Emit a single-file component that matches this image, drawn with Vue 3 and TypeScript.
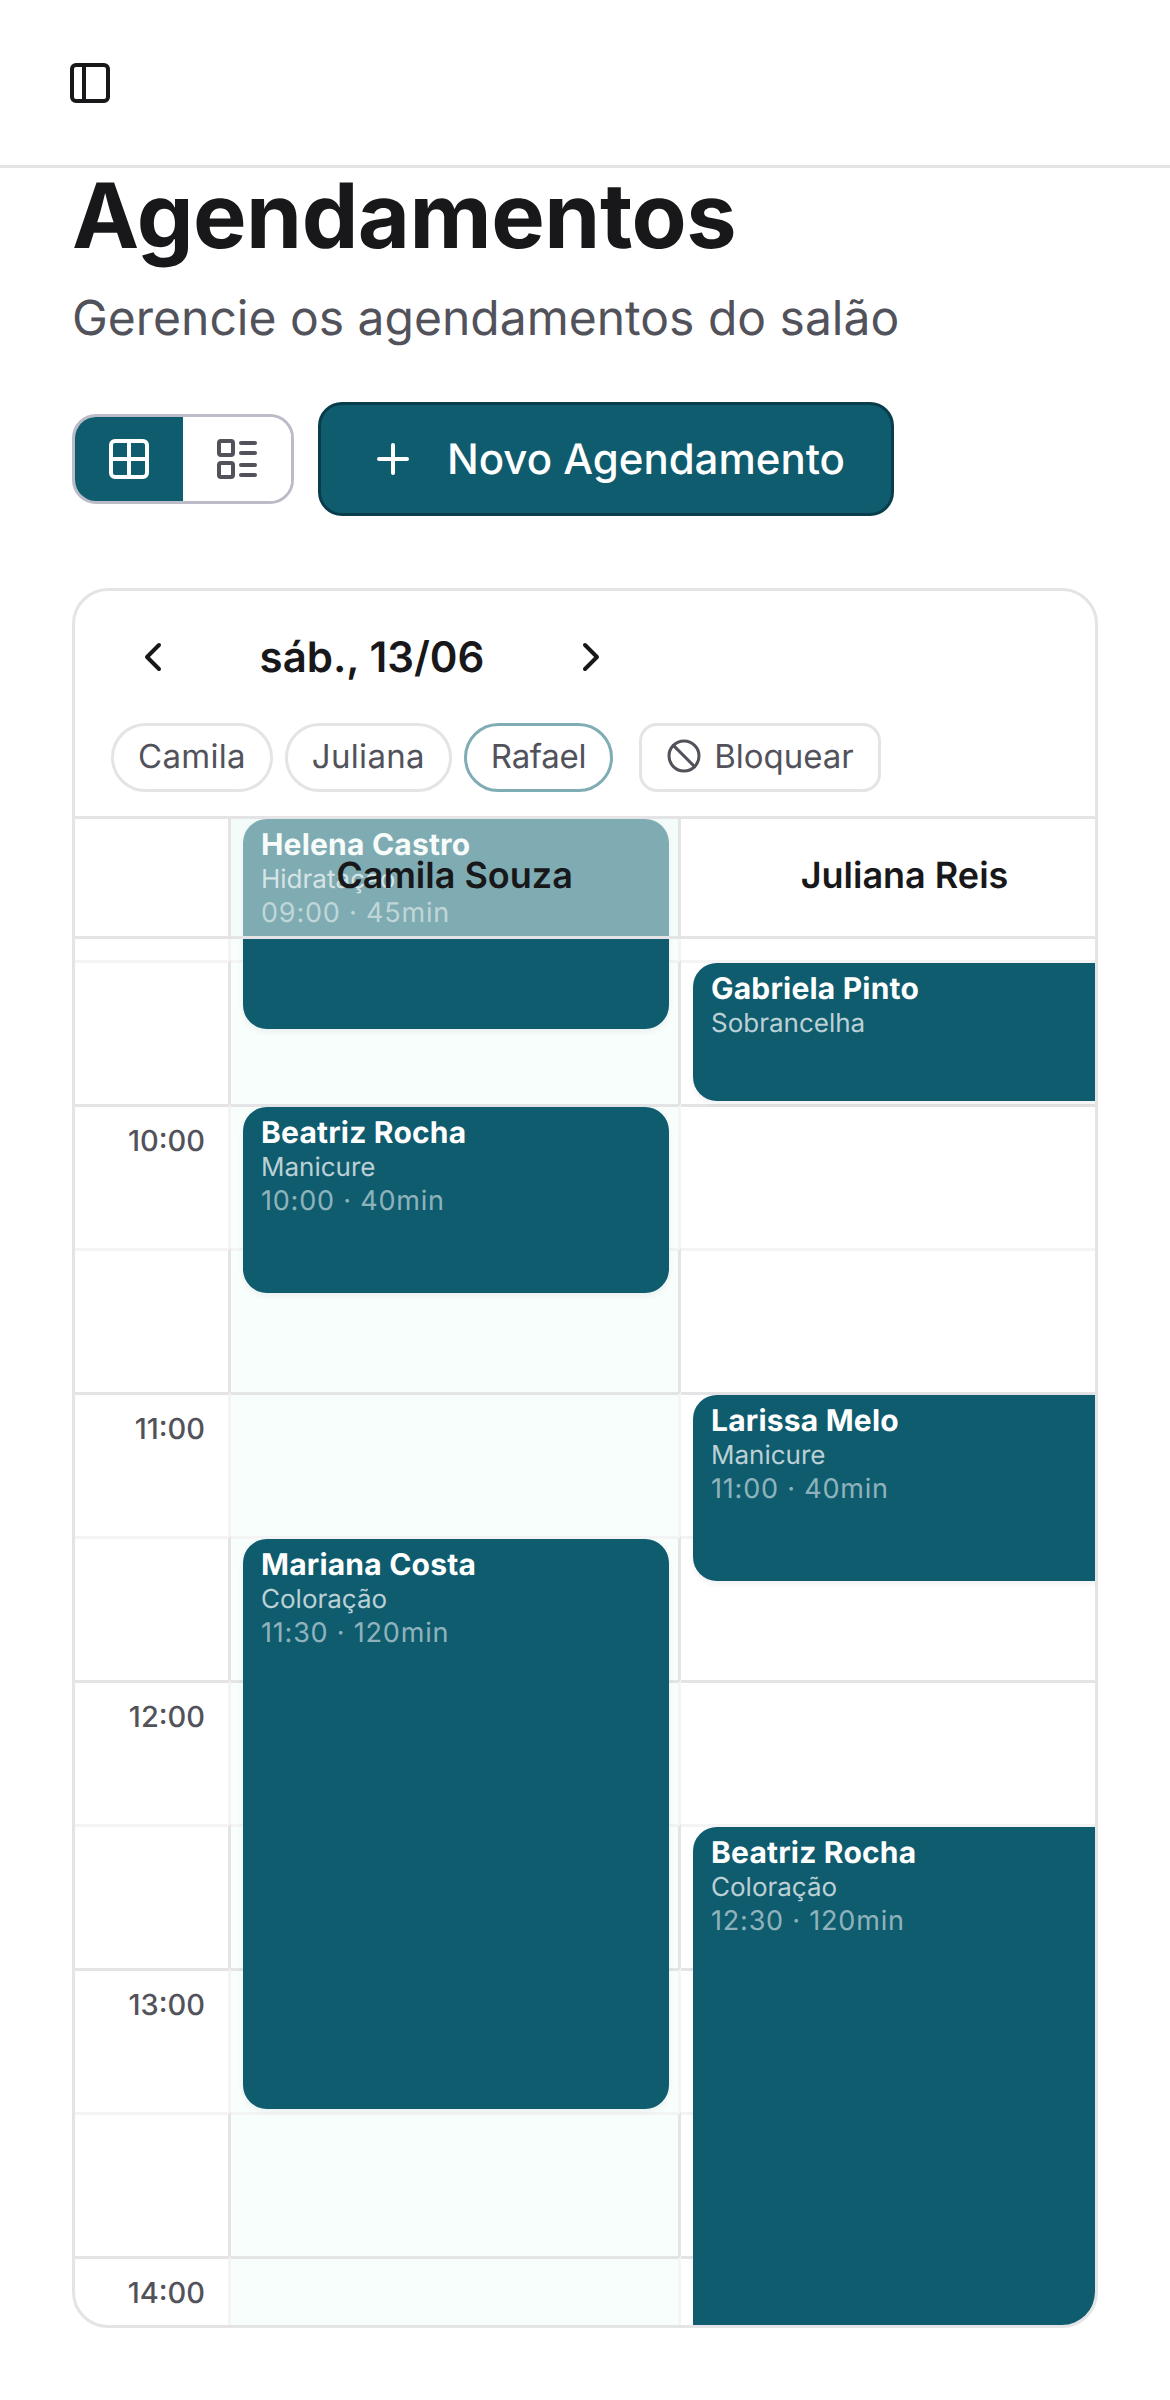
<script setup lang="ts">
interface Booking {
  name: string
  service: string
  start: number
  duration: number
  label: string
  showTime: boolean
}

const times: string[] = []
for (let h = 9; h <= 14; h++) {
  times.push(`${String(h).padStart(2, '0')}:00`)
  if (h < 14) times.push(`${String(h).padStart(2, '0')}:30`)
}

const columns: { name: string; today: boolean; bookings: Booking[] }[] = [
  {
    name: 'Camila Souza',
    today: true,
    bookings: [
      { name: 'Helena Castro', service: 'Hidratação', start: 0, duration: 45, label: '09:00 · 45min', showTime: true },
      { name: 'Beatriz Rocha', service: 'Manicure', start: 60, duration: 40, label: '10:00 · 40min', showTime: true },
      { name: 'Mariana Costa', service: 'Coloração', start: 150, duration: 120, label: '11:30 · 120min', showTime: true },
    ],
  },
  {
    name: 'Juliana Reis',
    today: false,
    bookings: [
      { name: 'Gabriela Pinto', service: 'Sobrancelha', start: 30, duration: 30, label: '', showTime: false },
      { name: 'Larissa Melo', service: 'Manicure', start: 120, duration: 40, label: '11:00 · 40min', showTime: true },
      { name: 'Beatriz Rocha', service: 'Coloração', start: 210, duration: 120, label: '12:30 · 120min', showTime: true },
    ],
  },
]

const filters = [
  { label: 'Camila', active: false },
  { label: 'Juliana', active: false },
  { label: 'Rafael', active: true },
]

function bookingStyle(b: Booking) {
  return {
    top: `${3 + (b.start / 30) * 144}px`,
    height: `${(b.duration / 30) * 144 - 6}px`,
  }
}
</script>

<template>
  <div class="page">
    <header class="topbar">
      <button class="icon-btn" aria-label="Alternar menu">
        <svg class="ic" viewBox="0 0 24 24"><rect x="3" y="3" width="18" height="18" rx="2" /><path d="M9 3v18" /></svg>
      </button>
    </header>

    <main class="main">
      <h1 class="title">Agendamentos</h1>
      <p class="subtitle">Gerencie os agendamentos do salão</p>

      <div class="toolbar">
        <div class="toggle">
          <button class="seg seg-on" aria-label="Grade">
            <svg class="ic" viewBox="0 0 24 24"><rect x="3" y="3" width="18" height="18" rx="2" /><path d="M3 12h18" /><path d="M12 3v18" /></svg>
          </button>
          <button class="seg" aria-label="Lista">
            <svg class="ic" viewBox="0 0 24 24"><rect x="3" y="3" width="7" height="7" rx="1" /><rect x="3" y="14" width="7" height="7" rx="1" /><path d="M14 4h7" /><path d="M14 9h7" /><path d="M14 15h7" /><path d="M14 20h7" /></svg>
          </button>
        </div>
        <button class="primary">
          <svg class="ic" viewBox="0 0 24 24"><path d="M5 12h14" /><path d="M12 5v14" /></svg>
          <span>Novo Agendamento</span>
        </button>
      </div>

      <section class="card">
        <div class="nav">
          <svg class="ic chev" viewBox="0 0 24 24"><path d="m15 18-6-6 6-6" /></svg>
          <span class="date">sáb., 13/06</span>
          <svg class="ic chev" viewBox="0 0 24 24"><path d="m9 18 6-6-6-6" /></svg>
        </div>

        <div class="filters">
          <button v-for="f in filters" :key="f.label" class="chip" :class="{ 'chip-on': f.active }">{{ f.label }}</button>
          <button class="block">
            <svg class="ic ic-sm" viewBox="0 0 24 24"><circle cx="12" cy="12" r="10" /><path d="m4.9 4.9 14.2 14.2" /></svg>
            <span>Bloquear</span>
          </button>
        </div>

        <div class="board">
          <div class="cols">
            <div class="col col-time">
              <div v-for="(t, i) in times" :key="t" class="slot" :class="i % 2 === 0 ? 'slot-hour' : 'slot-half'">
                <span v-if="i % 2 === 0" class="time">{{ t }}</span>
              </div>
            </div>
            <div v-for="c in columns" :key="c.name" class="col col-staff" :class="{ 'col-today': c.today }">
              <div v-for="(t, i) in times" :key="t" class="slot" :class="i % 2 === 0 ? 'slot-hour' : 'slot-half'"></div>
              <article v-for="b in c.bookings" :key="b.label + b.name" class="booking" :style="bookingStyle(b)">
                <strong class="b-name">{{ b.name }}</strong>
                <span class="b-service">{{ b.service }}</span>
                <span v-if="b.showTime" class="b-time">{{ b.label }}</span>
              </article>
            </div>
          </div>

          <div class="heads">
            <div class="head head-time"></div>
            <div v-for="c in columns" :key="c.name" class="head" :class="{ 'head-today': c.today }">{{ c.name }}</div>
          </div>
        </div>
      </section>
    </main>
  </div>
</template>

<style scoped>
.page {
  width: 1170px;
  height: 2400px;
  overflow: hidden;
  background: #fff;
  color: #18181b;
  font-family: Inter, "Liberation Sans", sans-serif;
  text-rendering: geometricPrecision;
}
button {
  font-family: inherit;
  text-rendering: geometricPrecision;
  background: none;
  border: 0;
  padding: 0;
  margin: 0;
}
.ic {
  width: 48px;
  height: 48px;
  flex: none;
  display: block;
  fill: none;
  stroke: currentColor;
  stroke-width: 2;
  stroke-linecap: round;
  stroke-linejoin: round;
}
.ic-sm {
  width: 36px;
  height: 36px;
}
.topbar {
  box-sizing: border-box;
  height: 168px;
  padding-left: 66px;
  display: flex;
  align-items: center;
  border-bottom: 3px solid #e4e4e7;
}
.icon-btn {
  color: #18181b;
}
.main {
  padding: 0 72px;
}
.title {
  margin: 0;
  font-size: 90px;
  line-height: 96px;
  font-weight: 700;
  letter-spacing: -0.5px;
  color: #18181b;
}
.subtitle {
  margin: 18px 0 0;
  font-size: 48px;
  line-height: 72px;
  color: #52525b;
}
.toolbar {
  margin-top: 48px;
  display: flex;
  align-items: center;
  gap: 24px;
}
.toggle {
  display: flex;
  border: 3px solid #bcbcc8;
  border-radius: 24px;
  overflow: hidden;
}
.seg {
  width: 108px;
  height: 84px;
  display: flex;
  align-items: center;
  justify-content: center;
  color: #52525b;
  background: #fff;
}
.seg-on {
  background: #0f5c6e;
  color: #fff;
}
.primary {
  box-sizing: border-box;
  width: 576px;
  height: 114px;
  padding-left: 48px;
  display: flex;
  align-items: center;
  gap: 30px;
  background: #0f5c6e;
  border: 3px solid #0a3d4b;
  border-radius: 24px;
  color: #fff;
  font-size: 42px;
  font-weight: 500;
}
.card {
  box-sizing: border-box;
  height: 1740px;
  margin-top: 72px;
  display: flex;
  flex-direction: column;
  border: 3px solid #e4e4e7;
  border-radius: 36px;
  overflow: hidden;
  background: #fff;
}
.nav {
  box-sizing: border-box;
  width: 486px;
  height: 48px;
  margin: 42px 0 0 54px;
  display: flex;
  align-items: center;
  justify-content: space-between;
  color: #18181b;
}
.date {
  margin-top: 2px;
  font-size: 42px;
  font-weight: 600;
  line-height: 48px;
}
.filters {
  margin-top: 42px;
  padding-left: 36px;
  display: flex;
  align-items: center;
  gap: 12px;
}
.chip,
.block {
  box-sizing: border-box;
  height: 69px;
  padding: 0 24px 3px;
  border: 3px solid #e4e4e7;
  color: #52525b;
  font-size: 33px;
  display: flex;
  align-items: center;
}
.chip {
  border-radius: 35px;
  letter-spacing: 0.3px;
}
.chip-on {
  border-color: #7facb5;
  letter-spacing: -0.3px;
}
.block {
  margin-left: 14px;
  gap: 12px;
  border-radius: 18px;
}
.board {
  position: relative;
  flex: 1;
  min-height: 0;
  margin-top: 24px;
  overflow: hidden;
}
.cols {
  display: flex;
  width: 1056px;
}
.col {
  position: relative;
  flex: none;
}
.col-time {
  width: 156px;
}
.col-staff {
  width: 450px;
}
.col-today {
  background: #f8fefc;
}
.slot {
  box-sizing: border-box;
  height: 144px;
  border-right: 3px solid #e4e4e7;
  border-top: 3px solid #f4f4f5;
}
.slot-hour {
  border-top-color: #e4e4e7;
  border-right-color: #f4f4f5;
}
.time {
  display: block;
  padding: 10px 23px 0 0;
  text-align: right;
  font-size: 29px;
  line-height: 48px;
  font-weight: 500;
  color: #52525b;
}
.booking {
  position: absolute;
  left: 12px;
  width: 426px;
  box-sizing: border-box;
  padding: 8px 18px;
  display: flex;
  flex-direction: column;
  border-radius: 24px;
  background: #0f5c6e;
  color: #fff;
  box-shadow: 0 3px 6px rgba(0, 0, 0, 0.06);
}
.b-name {
  font-size: 30px;
  line-height: 36px;
  font-weight: 700;
  letter-spacing: 0.2px;
}
.b-service {
  font-size: 26px;
  line-height: 33px;
  color: rgba(255, 255, 255, 0.72);
}
.b-time {
  font-size: 27px;
  line-height: 33px;
  letter-spacing: 0.8px;
  color: rgba(255, 255, 255, 0.55);
}
.heads {
  position: absolute;
  top: 0;
  left: 0;
  width: 1056px;
  height: 123px;
  box-sizing: border-box;
  display: flex;
  border-top: 3px solid #e4e4e7;
  border-bottom: 3px solid #e4e4e7;
}
.head {
  box-sizing: border-box;
  width: 450px;
  flex: none;
  padding-bottom: 6px;
  display: flex;
  align-items: center;
  justify-content: center;
  border-right: 3px solid #e4e4e7;
  background: rgba(255, 255, 255, 0.5);
  font-size: 36px;
  font-weight: 600;
  color: #18181b;
}
.head-today {
  background: rgba(240, 250, 246, 0.5);
}
.head-time {
  width: 156px;
  background: #fff;
}
</style>
